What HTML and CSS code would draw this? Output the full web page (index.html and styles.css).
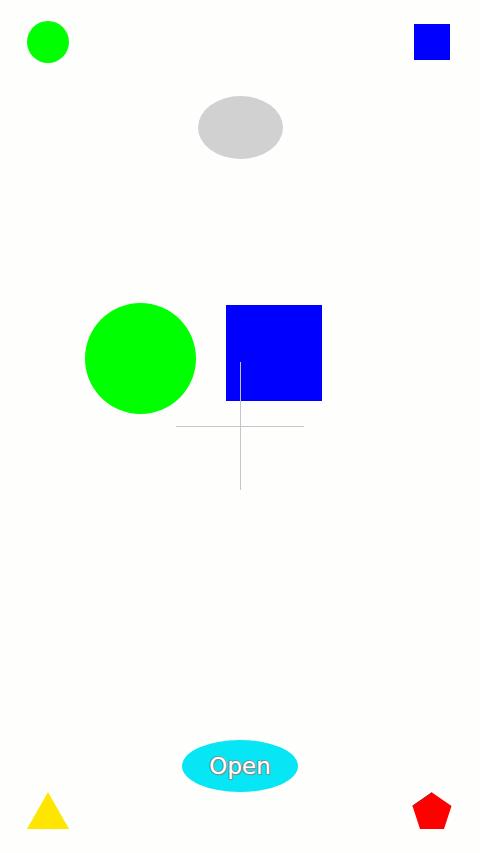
FILE: index.html
```html
<!DOCTYPE html>
<html>
<head>
<meta charset="utf-8">
<link rel="stylesheet" href="styles.css">
</head>
<body>
<div class="stage">
  <div class="top-row">
    <div class="dot-small"></div>
    <div class="square-small"></div>
  </div>
  <div class="ellipse"></div>
  <div class="mid-row">
    <div class="dot-big"></div>
    <div class="square-big"></div>
  </div>
  <div class="crosshair"></div>
  <div class="bottom">
    <div class="open-btn">Open</div>
    <div class="bottom-row">
      <svg class="tri" width="42" height="37" viewBox="0 0 42 37"><polygon points="21,0 42,37 0,37" fill="#ffe600"/></svg>
      <svg class="penta" width="40" height="37" viewBox="0 0 40 37"><polygon points="20,0.5 39.5,14 32,37 8,37 0.5,14" fill="#ff0000"/><polyline points="0.5,14 20,0.5" fill="none" stroke="#b01818" stroke-width="1"/></svg>
    </div>
  </div>
</div>
</body>
</html>
```
FILE: styles.css
```css
html, body {
  margin: 0;
  padding: 0;
}
body {
  background: #fefefd;
  font-family: "DejaVu Sans", "Liberation Sans", sans-serif;
}
.stage {
  position: relative;
  width: 480px;
  height: 853px;
  display: flex;
  flex-direction: column;
}
.top-row {
  display: flex;
  justify-content: space-between;
  align-items: flex-start;
  padding: 21px 30px 0 27px;
}
.dot-small {
  width: 42px;
  height: 42px;
  border-radius: 50%;
  background: #00ff00;
}
.square-small {
  width: 36px;
  height: 36px;
  margin-top: 3px;
  background: #0000ff;
}
.ellipse {
  align-self: center;
  width: 85px;
  height: 63px;
  margin-top: 33px;
  border-radius: 50%;
  background: #d0d1d0;
}
.mid-row {
  display: flex;
  align-items: flex-start;
  gap: 30px;
  margin-top: 144px;
  padding-left: 85px;
}
.dot-big {
  width: 111px;
  height: 111px;
  border-radius: 50%;
  background: #00ff00;
}
.square-big {
  width: 96px;
  height: 96px;
  margin-top: 2px;
  background: #0000ff;
}
.crosshair {
  position: absolute;
  left: 176px;
  top: 362px;
  width: 128px;
  height: 128px;
}
.crosshair::before {
  content: "";
  position: absolute;
  left: 64px;
  top: 0;
  width: 1px;
  height: 128px;
  background: #c4c4cc;
}
.crosshair::after {
  content: "";
  position: absolute;
  left: 0;
  top: 64px;
  width: 128px;
  height: 1px;
  background: #c4c4cc;
}
.bottom {
  margin-top: auto;
  padding-bottom: 24px;
  display: flex;
  flex-direction: column;
}
.open-btn {
  align-self: center;
  width: 116px;
  height: 52px;
  border-radius: 50%;
  background: #06e6f4;
  color: #ffffff;
  font-size: 23px;
  display: flex;
  align-items: center;
  justify-content: center;
  text-shadow: 1px 0 0 #808f96, -1px 0 0 #808f96, 0 1px 0 #808f96, 0 -1px 0 #808f96, 1px 1px 1px #708088;
}
.bottom-row {
  display: flex;
  justify-content: space-between;
  align-items: flex-end;
  padding: 0 28px 0 27px;
}
.tri, .penta {
  display: block;
}
```
